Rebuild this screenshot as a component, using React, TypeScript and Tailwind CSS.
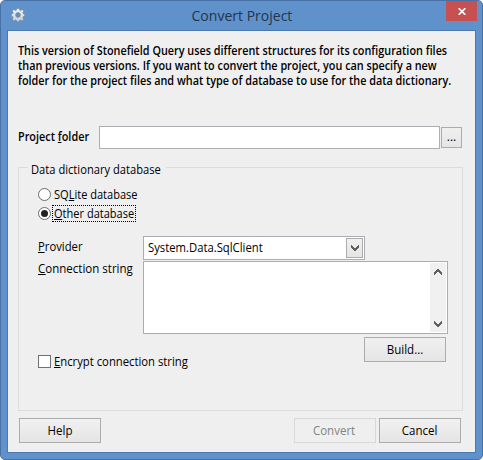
import React from "react";

function Chevron({ up = false }: { up?: boolean }) {
  return (
    <svg width="8" height="6" viewBox="0 0 8 6" className={up ? "rotate-180" : ""} shapeRendering="crispEdges">
      <path d="M0 0h1v1h1v1h1v1h2V2h1V1h1V0h1v3H7v1H6v1H5v1H3V5H2V4H1V3H0z" fill="#606060" />
    </svg>
  );
}

function Gear() {
  return (
    <svg width="14" height="14" viewBox="0 0 14 14">
      <defs>
        <linearGradient id="gear" x1="0" y1="0" x2="0" y2="1">
          <stop offset="0" stopColor="#f4f4f4" />
          <stop offset="1" stopColor="#c9cdd2" />
        </linearGradient>
      </defs>
      <path
        fillRule="evenodd"
        fill="url(#gear)"
        stroke="#6f7f93"
        strokeWidth="0.6"
        d="M5.7.4h2.6l.4 1.8 1 .4 1.5-1 1.6 1.6-1 1.5.4 1 1.5.3v2.3l-1.6.4-.4 1 1 1.6-1.6 1.6-1.5-1-1 .4-.4 1.5H5.8l-.4-1.5-1-.4-1.6 1-1.6-1.6 1-1.5-.4-1L.3 8.300V5.900l1.500-.3.400-1-1-1.500 1.600-1.600 1.600 1 1-.4zM7 4.600a2.400 2.400 0 1 0 0 4.800 2.400 2.400 0 0 0 0-4.800z"
      />
    </svg>
  );
}

function U({ children }: { children: React.ReactNode }) {
  return <span className="border-b border-current inline-block h-[13px] leading-[13px]">{children}</span>;
}

function Button({ children, disabled = false }: { children: React.ReactNode; disabled?: boolean }) {
  return (
    <button
      className={
        disabled
          ? "w-[82px] h-[25px] border border-[#d9d9d9] bg-[#efefef] text-[#838383] flex items-center justify-center"
          : "w-[82px] h-[25px] border border-[#acacac] bg-linear-to-b from-[#f0f0f0] to-[#e5e5e5] flex items-center justify-center"
      }
    >
      <span className="scale-x-[0.96] pr-px">{children}</span>
    </button>
  );
}

export default function App() {
  return (
    <div className="w-[483px] h-[460px] bg-white overflow-hidden">
      <div className="w-[483px] h-[460px] rounded-[5px] border border-[#4a71a5] bg-[#5f91cb] px-1.5 flex flex-col font-['Open_Sans','Noto_Sans',sans-serif] text-[12px] leading-[15px] text-black">
        <header className="h-[29px] shrink-0 flex items-start">
          <div className="w-[31px] pl-[4px] pt-[7px]"><Gear /></div>
          <h1 className="flex-1 text-center text-[15px] leading-[20px] pt-[4px] text-[#26354a]">
            <span className="inline-block scale-x-[0.935]">Convert Project</span>
          </h1>
          <button className="w-[31px] h-5 mr-[-1px] bg-[#c75050] flex items-center justify-center">
            <svg width="8" height="7" viewBox="0 0 8 7"><path d="M.7.2l6.600 6.600M7.300.2L.7 6.800" stroke="#fff" strokeWidth="1.700" /></svg>
          </button>
        </header>
        <main className="h-[423px] w-[469px] shrink-0 border border-[#4d78ae] bg-[#efefef] pl-[10px]">
          <div className="pt-[12px] h-[95px] font-semibold whitespace-nowrap flex flex-col items-start">
            <div className="origin-left scale-x-[0.902]">This version of Stonefield Query uses different structures for its configuration files</div>
            <div className="origin-left scale-x-[0.902]">than previous versions. If you want to convert the project, you can specify a new</div>
            <div className="origin-left scale-x-[0.902]">folder for the project files and what type of database to use for the data dictionary.</div>
          </div>
          <div className="flex h-[41px]">
            <label className="w-[81px] pt-[3px] font-semibold whitespace-nowrap"><span className="inline-block origin-left scale-x-[0.905]">Project <U>f</U>older</span></label>
            <input className="w-[341px] h-[23px] bg-white border border-[#abadb3]" />
            <button className="ml-px mt-px w-[21px] h-[21px] border border-[#acacac] bg-linear-to-b from-[#f0f0f0] to-[#e5e5e5] leading-[18px] pb-px">...</button>
          </div>
          <section className="w-[445px] h-[244px] border border-[#dcdcdc] pl-[19px]">
            <div className="-mt-[7px] ml-[-10px] pl-[3px] pt-px w-[138px] whitespace-nowrap bg-[#efefef] h-[15px]"><span className="inline-block origin-left scale-x-[0.93]">Data dictionary database</span></div>
            <label className="flex mt-[12px] h-[19px]">
              <span className="w-[13px] h-[13px] rounded-full border border-[#6c6c6c] bg-white" />
              <span className="ml-[3px] -mt-px origin-left scale-x-[0.92]">SQ<U>L</U>ite database</span>
            </label>
            <label className="flex h-[29px]">
              <span className="w-[13px] h-[13px] rounded-full border border-[#6c6c6c] bg-white flex items-center justify-center">
                <span className="w-[7px] h-[7px] rounded-full bg-[#222]" />
              </span>
              <span className="ml-px -mt-[2px] pl-px w-[84px] h-[17px] border border-dotted border-black whitespace-nowrap"><span className="inline-block origin-left scale-x-[0.92]"><U>O</U>ther database</span></span>
            </label>
            <div className="flex h-[25px]">
              <span className="w-[105px] pt-[3px]"><span className="inline-block origin-left scale-x-[0.94]"><U>P</U>rovider</span></span>
              <div className="w-[222px] h-[24px] border border-[#abadb3] bg-white flex items-start p-px">
                <span className="flex-1 pl-[3px] pt-[2px]"><span className="inline-block origin-left scale-x-[0.94]">System.Data.SqlClient</span></span>
                <span className="w-[17px] h-[20px] border border-[#acacac] bg-linear-to-b from-[#f0f0f0] to-[#e5e5e5] flex items-center justify-center"><Chevron /></span>
              </div>
            </div>
            <div className="flex h-[73px]">
              <span className="w-[105px] whitespace-nowrap"><span className="inline-block origin-left scale-x-[0.96]"><U>C</U>onnection string</span></span>
              <div className="w-[305px] h-[73px] border border-[#abadb3] bg-white p-px flex justify-end">
                <div className="w-4 h-[69px] bg-[#f0f0f0] flex flex-col justify-between items-center pt-[6px] pb-[5px]"><Chevron up /><Chevron /></div>
              </div>
            </div>
            <div className="pl-[326px] pt-[3px] h-[21px]"><Button>Build...</Button></div>
            <label className="flex w-[200px]">
              <span className="w-[13px] h-[13px] border border-[#707070] bg-white" />
              <span className="ml-[3px] -mt-px origin-left scale-x-[0.94]"><U>E</U>ncrypt connection string</span>
            </label>
          </section>
          <footer className="flex pt-[7px] pl-px">
            <Button>Help</Button>
            <div className="w-[193px]" />
            <Button disabled>Convert</Button>
            <div className="w-[3px]" />
            <Button>Cancel</Button>
          </footer>
        </main>
      </div>
    </div>
  );
}
